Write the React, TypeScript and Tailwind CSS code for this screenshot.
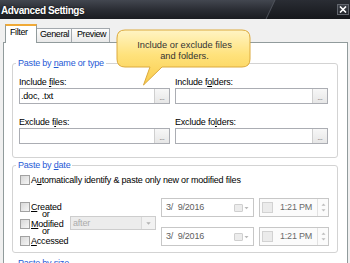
import type { ReactNode } from "react";

function Key({ children }: { children: ReactNode }) {
  return <span className="underline underline-offset-[1px]">{children}</span>;
}

function Checkbox() {
  return (
    <span className="block h-[10px] w-[10px] shrink-0 border border-[#a2a2a2] bg-gradient-to-br from-[#d8d8d8] to-[#f6f6f6]" />
  );
}

function PathInput({ value }: { value?: string }) {
  return (
    <div className="flex h-[16px] border border-[#abadb3] bg-white">
      <div className="flex-1 pl-[1px] leading-[14px] text-black">{value}</div>
      <div className="flex w-[15px] items-end justify-center border-l border-[#cfcfcf] bg-gradient-to-b from-[#f7f7f7] to-[#e7e7e7] pb-[2px] text-[7px] leading-[7px] text-[#555]">
        ...
      </div>
    </div>
  );
}

function TitleBar() {
  return (
    <div className="relative flex h-[19px] items-center overflow-hidden bg-gradient-to-b from-[#434750] via-[#2b2e35] to-[#1a1c21] pl-[1px] pt-[1px]">
      <div className="absolute inset-y-0 left-[270px] right-[-20px] -skew-x-[25deg] border-l border-[#4e525a] bg-gradient-to-b from-[#2a2d34] to-[#16181c]" />
      <span className="relative text-[10px] font-bold tracking-[-0.4px] text-white [text-shadow:0_0_2px_rgba(0,0,0,0.9)]">
        Advanced Settings
      </span>
      <div className="absolute right-[1px] top-[4px] flex h-[11px] w-[12px] items-center justify-center border border-[#62666e] bg-gradient-to-b from-[#3c4048] to-[#24272d]">
        <svg width="8" height="7" viewBox="0 0 8 7">
          <path d="M1 0.5 L7 6.5 M7 0.5 L1 6.5" stroke="#ffffff" strokeWidth="1.6" />
        </svg>
      </div>
    </div>
  );
}

function Tabs() {
  return (
    <div className="flex h-[23px] items-end pl-[2px] tracking-[-0.4px]">
      <div className="relative z-10 -mb-px h-[19px] w-[32px] border-x border-t-2 border-x-[#919b9c] border-t-[#f0aa38] bg-white pl-[4px] pt-[1px] leading-[11px]">
        Filter
      </div>
      <div className="h-[14px] w-[35px] overflow-hidden whitespace-nowrap border-r border-t border-[#a3a8ad] bg-gradient-to-b from-[#fdfdfd] to-[#e9e9e9] pl-[3px] leading-[11px]">
        General
      </div>
      <div className="h-[14px] w-[38px] overflow-hidden whitespace-nowrap border-r border-t border-[#a3a8ad] bg-gradient-to-b from-[#fdfdfd] to-[#e9e9e9] pl-[5px] leading-[11px]">
        Preview
      </div>
    </div>
  );
}

function DatePicker() {
  return (
    <div className="flex h-[19px] items-center border border-[#c7c7c7] bg-white pl-[4px] pr-[4px]">
      <span className="flex-1 whitespace-pre text-[#5e5e5e]">3/  9/2016</span>
      <span className="h-[8px] w-[9px] rounded-[1px] border border-[#cfcfcf] bg-[#ececec]" />
      <svg width="5" height="4" viewBox="0 0 5 4" className="ml-[1px]">
        <path d="M0.5 1 L4.5 1 L2.5 3.2 Z" fill="#b9b9b9" />
      </svg>
    </div>
  );
}

function TimePicker() {
  return (
    <div className="flex h-[19px] items-center border border-[#c7c7c7] bg-[#fbfbfb] pl-[2px]">
      <span className="h-[11px] w-[11px] border border-[#d2d2d2] bg-[#ebebeb]" />
      <span className="flex-1 pl-[7px] text-[#6a6a6a]">1:21 PM</span>
      <div className="flex h-full w-[11px] flex-col items-center justify-center gap-[3px] border-l border-[#e2e2e2]">
        <svg width="5" height="3" viewBox="0 0 5 3">
          <path d="M0.5 2.8 L4.5 2.8 L2.5 0.5 Z" fill="#bdbdbd" />
        </svg>
        <svg width="5" height="3" viewBox="0 0 5 3">
          <path d="M0.5 0.2 L4.5 0.2 L2.5 2.5 Z" fill="#bdbdbd" />
        </svg>
      </div>
    </div>
  );
}

function DateCheck({ label }: { label: ReactNode }) {
  return (
    <div className="flex h-[10px] items-center gap-[1px] leading-[10px]">
      <Checkbox />
      <span>{label}</span>
    </div>
  );
}

function Or() {
  return <div className="h-[7px] pl-[22px] leading-[4px]">or</div>;
}

function Callout() {
  return (
    <div className="absolute left-[116px] top-[29px] h-[58px] w-[136px]">
      <svg width="136" height="58" viewBox="0 0 136 58" className="absolute inset-0">
        <defs>
          <linearGradient id="tip" x1="0" y1="0" x2="0" y2="1">
            <stop offset="0" stopColor="#fff4c4" />
            <stop offset="0.45" stopColor="#ffe27c" />
            <stop offset="1" stopColor="#f9cc4c" />
          </linearGradient>
        </defs>
        <path
          d="M9 1 H126 Q134 1 134 9 V30 Q134 38 126 38 H46 L27.5 56 L34 38 H9 Q1 38 1 30 V9 Q1 1 9 1 Z"
          fill="url(#tip)"
          stroke="#dcaa3e"
          strokeWidth="1"
        />
      </svg>
      <div className="relative w-[134px] pl-[3px] pt-[11px] text-center text-[9.3px] leading-[10.6px] tracking-normal text-[#333]">
        Include or exclude files
        <br />
        and folders.
      </div>
    </div>
  );
}

export default function App() {
  return (
    <div className="relative h-[263px] w-[350px] overflow-hidden bg-[#f0f0f0] font-['Liberation_Sans',Arial,sans-serif] text-[9px] tracking-[-0.2px] text-black">
      <TitleBar />
      <div className="pl-[3px] pr-[2px]">
        <Tabs />
        <div className="h-[240px] border border-[#919b9c] bg-white pl-[8px] pr-[9px] pt-[14px]">
          <fieldset className="rounded-[3px] border border-[#d3d3d3]">
            <legend className="ml-[3px] px-[2px] leading-[12px] text-[#1f5ad6]">
              Paste by <Key>n</Key>ame or type
            </legend>
            <div className="grid grid-cols-[151px_153px] gap-x-[5px] pb-[13px] pl-[6px] pt-[8px]">
              <div>
                <div className="h-[11px] leading-[11px]">
                  Include <Key>f</Key>iles:
                </div>
                <PathInput value=".doc, .txt" />
                <div className="mt-[13px] h-[11px] leading-[11px]">
                  Exclude f<Key>i</Key>les:
                </div>
                <PathInput />
              </div>
              <div>
                <div className="h-[11px] leading-[11px]">
                  Include f<Key>o</Key>lders:
                </div>
                <PathInput />
                <div className="mt-[13px] h-[11px] leading-[11px]">
                  Exclude fo<Key>l</Key>ders:
                </div>
                <PathInput />
              </div>
            </div>
          </fieldset>

          <fieldset className="mt-[1px] rounded-[3px] border border-[#d3d3d3]">
            <legend className="ml-[3px] px-[2px] leading-[12px] text-[#1f5ad6]">
              Paste by <Key>d</Key>ate
            </legend>
            <div className="pb-[6px] pl-[7px] pt-[4px]">
              <DateCheck
                label={
                  <>
                    A<Key>u</Key>tomatically identify &amp; paste only new or modified files
                  </>
                }
              />
              <div className="mt-[13px] flex">
                <div className="mt-[4px] w-[50px]">
                  <DateCheck label={<><Key>C</Key>reated</>} />
                  <Or />
                  <DateCheck label={<><Key>M</Key>odified</>} />
                  <Or />
                  <DateCheck label={<><Key>A</Key>ccessed</>} />
                </div>
                <div className="mt-[18px] flex h-[14px] w-[86px] border border-[#cdcdcd] bg-[#ececec]">
                  <span className="flex-1 pl-[2px] leading-[12px] text-[#ababab]">after</span>
                  <span className="flex w-[14px] items-center justify-center border-l border-[#dadada] bg-[#f2f2f2]">
                    <svg width="5" height="3" viewBox="0 0 5 3">
                      <path d="M0.3 0.3 L4.7 0.3 L2.5 2.8 Z" fill="#b3b3b3" />
                    </svg>
                  </span>
                </div>
                <div className="ml-[5px] flex w-[93px] flex-col gap-[10px]">
                  <DatePicker />
                  <DatePicker />
                </div>
                <div className="ml-[5px] flex w-[70px] flex-col gap-[10px]">
                  <TimePicker />
                  <TimePicker />
                </div>
              </div>
            </div>
          </fieldset>

          <fieldset className="mt-[4px] h-[40px] rounded-[3px] border border-[#d3d3d3]">
            <legend className="ml-[3px] px-[2px] leading-[12px] text-[#1f5ad6]">
              Paste by <Key>s</Key>ize
            </legend>
          </fieldset>
        </div>
      </div>
      <Callout />
    </div>
  );
}
